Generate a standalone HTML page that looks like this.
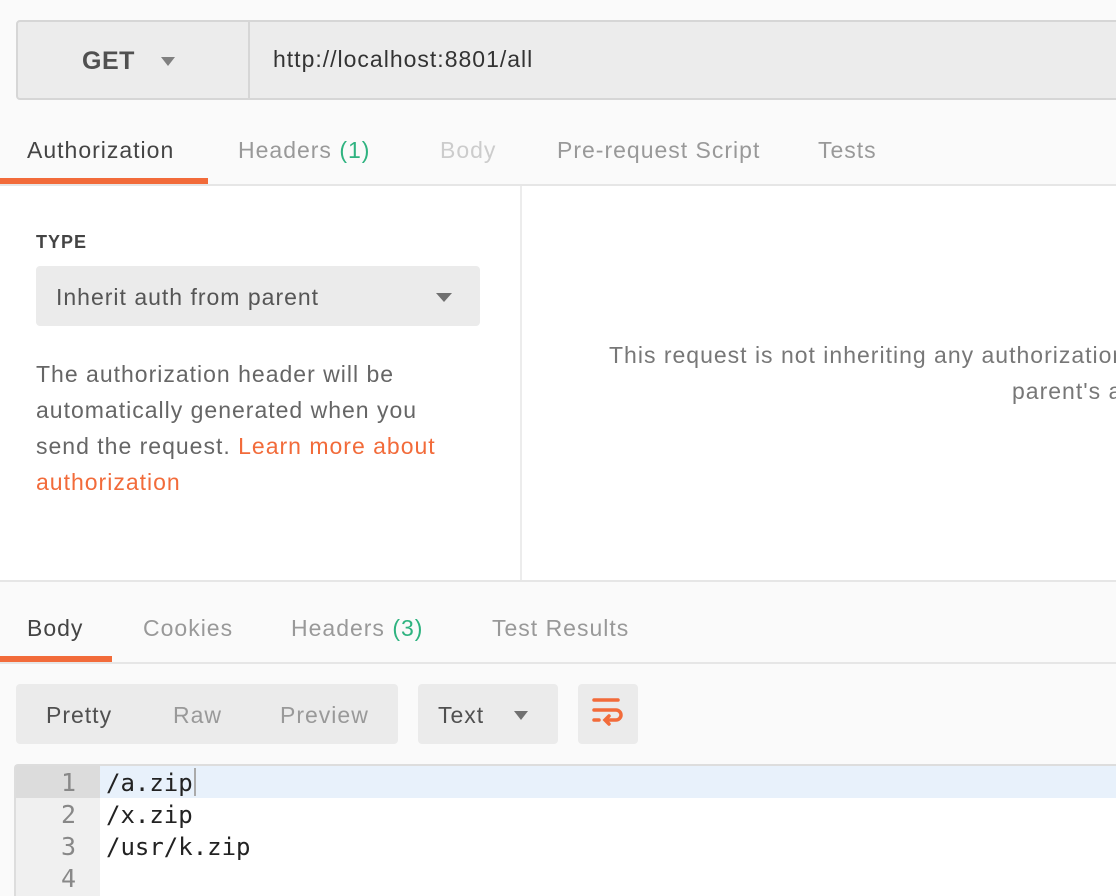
<!DOCTYPE html>
<html><head><meta charset="utf-8"><style>
*{margin:0;padding:0;box-sizing:border-box}
html,body{width:1116px;height:896px;overflow:hidden}
body{background:#fafafa;font-family:"Liberation Sans",sans-serif;position:relative;color:#505050;letter-spacing:1px}
.a{position:absolute;white-space:nowrap}
.t{font-size:23px;color:#999;line-height:26px}
.g{color:#2fb380}
</style></head><body>
<div class="a" style="left:16px;top:20px;width:1110px;height:80px;background:#ececec;border:2px solid #d6d6d6;border-radius:4px"></div>
<div class="a" style="left:248px;top:22px;width:2px;height:76px;background:#d6d6d6"></div>
<div class="a" style="left:82px;top:47px;font-size:25px;font-weight:bold;color:#505050;letter-spacing:0.5px">GET</div>
<div class="a" style="left:161px;top:57px;width:0;height:0;border-left:7px solid transparent;border-right:7px solid transparent;border-top:9px solid #808080"></div>
<div class="a" style="left:273px;top:46px;font-size:23px;color:#333">http://localhost:8801/all</div>

<div class="a t" style="left:27px;top:137px;color:#444">Authorization</div>
<div class="a t" style="left:238px;top:137px">Headers <span class="g">(1)</span></div>
<div class="a t" style="left:440px;top:137px;color:#ccc">Body</div>
<div class="a t" style="left:557px;top:137px">Pre-request Script</div>
<div class="a t" style="left:818px;top:137px">Tests</div>
<div class="a" style="left:0;top:184px;width:1116px;height:2px;background:#e6e6e6"></div>
<div class="a" style="left:0;top:178px;width:208px;height:6px;background:#f26b3a"></div>

<div class="a" style="left:0;top:186px;width:1116px;height:394px;background:#fff"></div>
<div class="a" style="left:520px;top:186px;width:2px;height:394px;background:#ececec"></div>
<div class="a" style="left:0;top:580px;width:1116px;height:2px;background:#e6e6e6"></div>
<div class="a" style="left:36px;top:232px;font-size:18px;font-weight:bold;color:#444">TYPE</div>
<div class="a" style="left:36px;top:266px;width:444px;height:60px;background:#ebebeb;border-radius:4px"></div>
<div class="a" style="left:56px;top:284px;font-size:23px;color:#555">Inherit auth from parent</div>
<div class="a" style="left:436px;top:293px;border-left:8px solid transparent;border-right:8px solid transparent;border-top:9px solid #707070"></div>
<div class="a" style="left:36px;top:356px;font-size:23px;line-height:36px;color:#666">The authorization header will be<br>automatically generated when you<br>send the request. <span style="color:#f26b3a">Learn more about<br>authorization</span></div>
<div class="a" style="left:609px;top:342px;font-size:23px;color:#777">This request is not inheriting any authorization helper at the moment.</div>
<div class="a" style="left:1012px;top:378px;font-size:23px;color:#777">parent's auth helper.</div>

<div class="a t" style="left:27px;top:615px;color:#444">Body</div>
<div class="a t" style="left:143px;top:615px">Cookies</div>
<div class="a t" style="left:291px;top:615px">Headers <span class="g">(3)</span></div>
<div class="a t" style="left:492px;top:615px">Test Results</div>
<div class="a" style="left:0;top:662px;width:1116px;height:2px;background:#e6e6e6"></div>
<div class="a" style="left:0;top:656px;width:112px;height:6px;background:#f26b3a"></div>

<div class="a" style="left:16px;top:684px;width:382px;height:60px;background:#ebebeb;border-radius:4px"></div>
<div class="a t" style="left:46px;top:702px;color:#505050">Pretty</div>
<div class="a t" style="left:173px;top:702px">Raw</div>
<div class="a t" style="left:280px;top:702px">Preview</div>
<div class="a" style="left:418px;top:684px;width:140px;height:60px;background:#ebebeb;border-radius:4px"></div>
<div class="a t" style="left:438px;top:702px;color:#505050">Text</div>
<div class="a" style="left:514px;top:711px;border-left:7px solid transparent;border-right:7px solid transparent;border-top:9px solid #707070"></div>
<div class="a" style="left:578px;top:684px;width:60px;height:60px;background:#ebebeb;border-radius:4px"></div>
<svg class="a" style="left:590px;top:696px" width="36" height="36" viewBox="0 0 36 36" fill="none" stroke="#f26b3a" stroke-width="3.5" stroke-linecap="round">
<path d="M4 4H28"/><path d="M4 14H26a5 5 0 0 1 0 10H16"/><path d="M19 20l-4 4 4 4"/><path d="M4 24H9"/></svg>

<div class="a" style="left:14px;top:764px;width:1102px;height:132px;background:#fff;border-top:2px solid #ddd;border-left:2px solid #ddd;border-radius:4px 0 0 0"></div>
<div class="a" style="left:16px;top:766px;width:84px;height:130px;background:#f0f0f0"></div>
<div class="a" style="left:16px;top:766px;width:84px;height:32px;background:#dcdcdc"></div>
<div class="a" style="left:100px;top:766px;width:1016px;height:32px;background:#e8f1fb"></div>
<div class="a" style="left:194px;top:768px;width:2px;height:28px;background:#aaa"></div>
<div class="a" style="left:40px;top:767px;font-family:'DejaVu Sans Mono',monospace;font-size:25px;line-height:32px;color:#888;text-align:right;width:36px;white-space:pre;letter-spacing:0">1
2
3
4</div>
<div class="a" style="left:106px;top:767px;font-family:'DejaVu Sans Mono','Liberation Mono',monospace;font-size:24px;line-height:32px;color:#222;white-space:pre;letter-spacing:0">/a.zip
/x.zip
/usr/k.zip</div>
</body></html>
